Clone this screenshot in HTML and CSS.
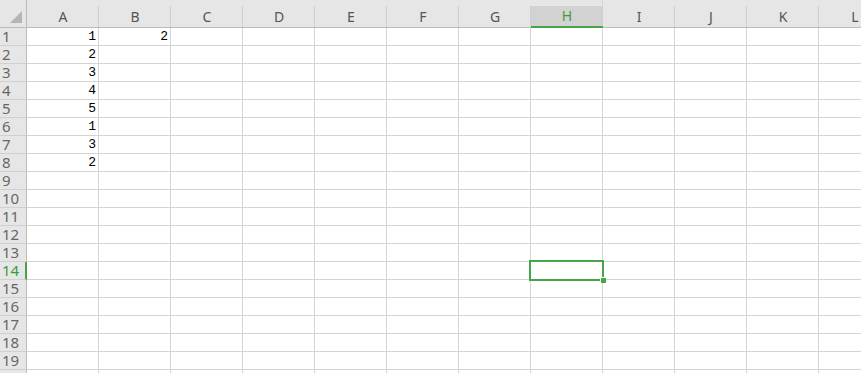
FILE: index.html
```html
<!DOCTYPE html>
<html lang="en">

<head>
  <meta charset="UTF-8">
  <meta name="viewport" content="width=device-width, initial-scale=1.0">
  <title>Sheet1</title>
  <link rel="stylesheet" href="styles.css">
</head>

<body>
  <div id="sheet">
    <div class="grid"></div>
    <div class="selection"><span class="handle"></span></div>
  </div>

  <script>
    // 表格数据
    var cols = ['A', 'B', 'C', 'D', 'E', 'F', 'G', 'H', 'I', 'J', 'K', 'L']
    var data = { A1: 1, A2: 2, A3: 3, A4: 4, A5: 5, A6: 1, A7: 3, A8: 2, B1: 2 }
    var activeCol = 'H'
    var activeRow = 14
    var grid = document.getElementsByClassName('grid')[0]

    function cell(cls, text) {
      let div = document.createElement('div')
      div.className = cls
      if (text !== undefined) div.innerHTML = text
      grid.appendChild(div)
    }

    // 列头
    cell('corner', '<span class="tri"></span>')
    for (let i = 0; i < cols.length; i++) {
      cell(cols[i] === activeCol ? 'col-head active' : 'col-head', cols[i])
    }
    // 行，第20行只露出边缘
    for (let r = 1; r <= 20; r++) {
      cell(r === activeRow ? 'row-head active' : 'row-head', r < 20 ? r : '')
      for (let i = 0; i < cols.length; i++) {
        let v = data[cols[i] + r]
        cell('cell', v === undefined ? '' : v)
      }
    }
  </script>
</body>

</html>
```

FILE: styles.css
```css
* {
  box-sizing: border-box;
}

body {
  margin: 0;
  overflow: hidden;
  background: #fff;
}

#sheet {
  position: relative;
  width: 861px;
  height: 373px;
  overflow: hidden;
}

.grid {
  display: grid;
  grid-template-columns: 27px repeat(12, 72px);
  grid-template-rows: 28px;
  grid-auto-rows: 18px;
}

.corner {
  position: relative;
  background: #e6e6e6;
  border-right: 1px solid #bcbcbc;
  border-bottom: 1px solid #bcbcbc;
}

.corner .tri {
  position: absolute;
  right: 4px;
  bottom: 4px;
  width: 0;
  height: 0;
  border-left: 12px solid transparent;
  border-bottom: 12px solid #b4b4b4;
}

.col-head {
  background: #e6e6e6;
  border-bottom: 1px solid #bcbcbc;
  font-family: "Noto Sans", "Open Sans", sans-serif;
  font-size: 14px;
  color: #555;
  text-align: center;
  line-height: 21px;
  padding-top: 6px;
  background-image: linear-gradient(#e6e6e6, #e6e6e6), linear-gradient(#cfcfcf, #cfcfcf);
  background-size: 71px 6px, 1px 21px;
  background-position: 0 0, right 6px;
  background-repeat: no-repeat;
}

.col-head.active {
  color: #3f9a3f;
  border-bottom: 2px solid #47a447;
  line-height: 19px;
  background-color: #d2d2d2;
}

.row-head {
  background: #e6e6e6;
  border-right: 1px solid #bcbcbc;
  border-bottom: 1px solid #d0d0d0;
  font-family: "Noto Sans", "Open Sans", sans-serif;
  font-size: 15px;
  color: #666;
  line-height: 17px;
  padding-left: 2px;
}

.row-head.active {
  color: #3f9a3f;
  border-right: 2px solid #47a447;
}

.cell {
  border-right: 1px solid #d4d4d4;
  border-bottom: 1px solid #d4d4d4;
  font-family: "Liberation Mono", monospace;
  font-size: 13px;
  color: #000;
  text-align: right;
  line-height: 18px;
  padding-right: 2px;
}

.selection {
  position: absolute;
  left: 529px;
  top: 260px;
  width: 75px;
  height: 21px;
  border: 2px solid #47a447;
}

.selection .handle {
  position: absolute;
  right: -4px;
  bottom: -4px;
  width: 6px;
  height: 6px;
  background: #47a447;
  border-left: 1px solid #fff;
  border-top: 1px solid #fff;
}
```
